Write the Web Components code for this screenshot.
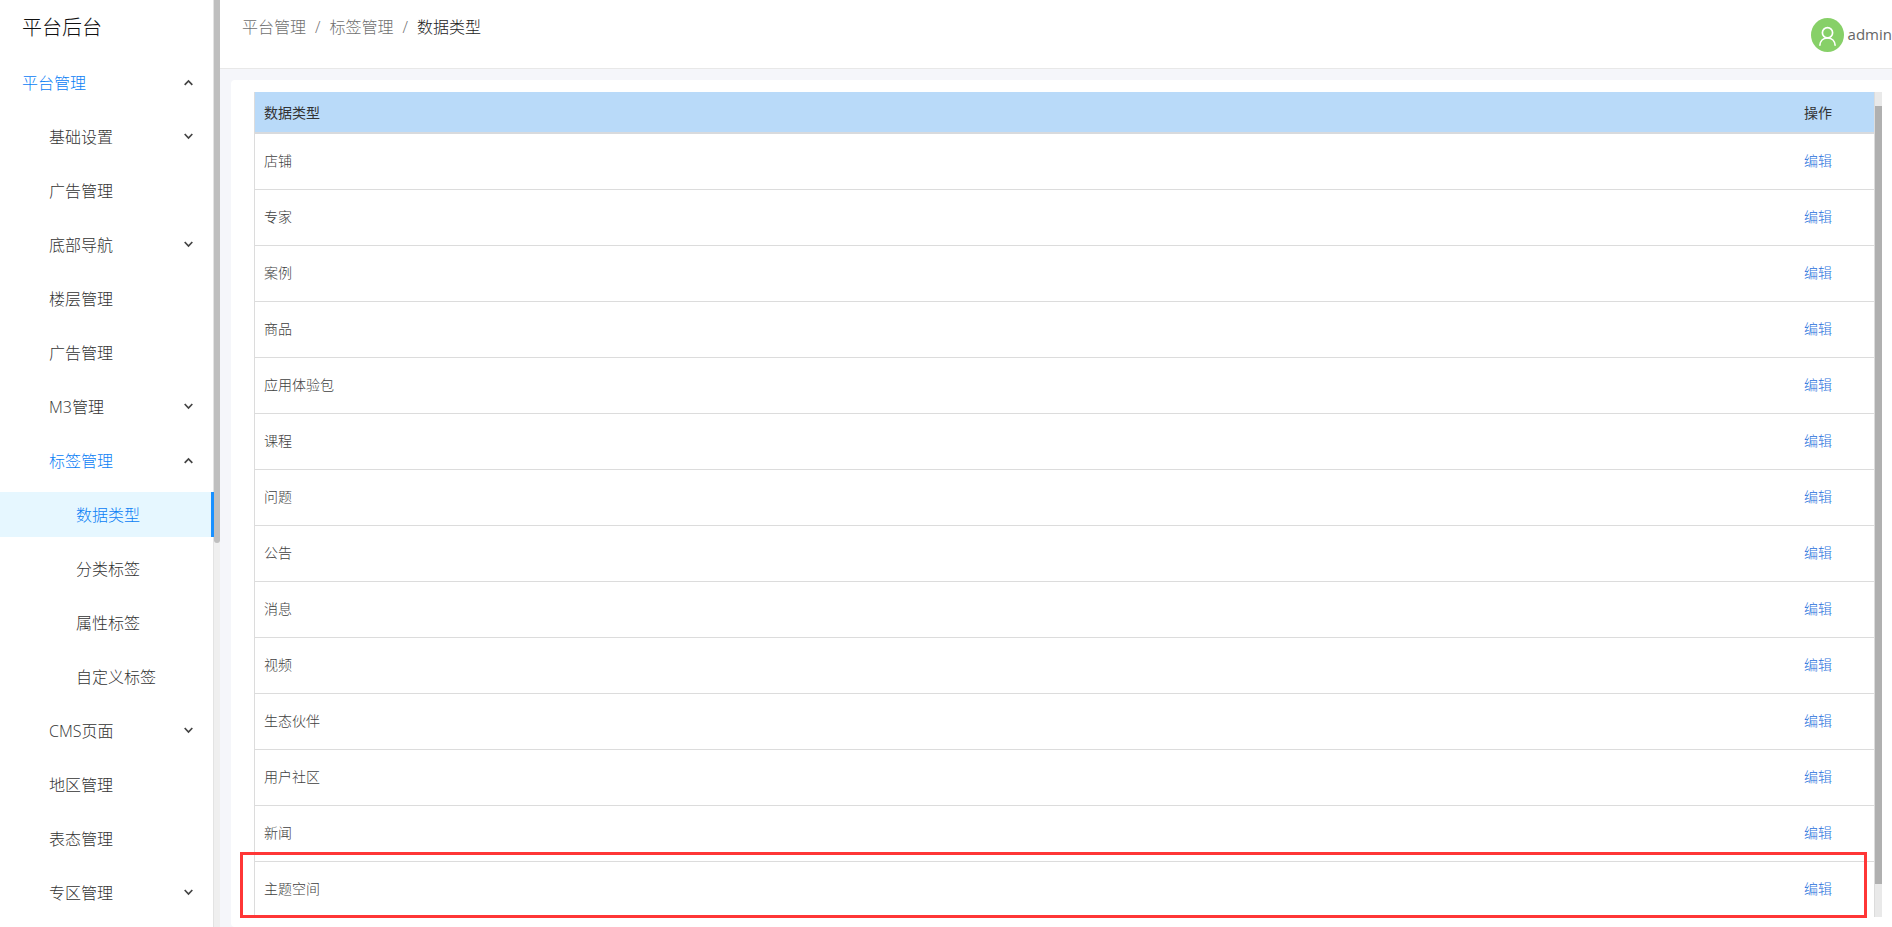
<!DOCTYPE html>
<html lang="zh-CN">
<head>
<meta charset="utf-8">
<title>平台后台</title>
<style>
  html, body { margin: 0; height: 100%; }
  body {
    font-family: "Open Sans", "Noto Sans CJK SC", sans-serif;
    font-size: 16px;
    font-weight: 300;
    color: #333;
    background: #f5f6fa;
    overflow: hidden;
    --primary: #1890ff;
    --primary-text: #0a80f5;
    --line: #dcdcdc;
  }
</style>
</head>
<body>
<admin-layout>
  <side-nav slot="side" heading="平台后台">
    <nav-item level="0" open within>平台管理</nav-item>
    <nav-item level="1" closed>基础设置</nav-item>
    <nav-item level="1">广告管理</nav-item>
    <nav-item level="1" closed>底部导航</nav-item>
    <nav-item level="1">楼层管理</nav-item>
    <nav-item level="1">广告管理</nav-item>
    <nav-item level="1" closed>M3管理</nav-item>
    <nav-item level="1" open within>标签管理</nav-item>
    <nav-item level="2" current>数据类型</nav-item>
    <nav-item level="2">分类标签</nav-item>
    <nav-item level="2">属性标签</nav-item>
    <nav-item level="2">自定义标签</nav-item>
    <nav-item level="1" closed>CMS页面</nav-item>
    <nav-item level="1">地区管理</nav-item>
    <nav-item level="1">表态管理</nav-item>
    <nav-item level="1" closed>专区管理</nav-item>
  </side-nav>
  <top-bar slot="top">
    <bread-crumbs items="平台管理,标签管理,数据类型"></bread-crumbs>
    <user-badge slot="user">admin</user-badge>
  </top-bar>
  <content-card>
    <type-table rows="店铺,专家,案例,商品,应用体验包,课程,问题,公告,消息,视频,生态伙伴,用户社区,新闻,主题空间"></type-table>
  </content-card>
</admin-layout>

<script>
  function define(name, markup, setup) {
    const template = document.createElement('template');
    template.innerHTML = markup;
    customElements.define(name, class extends HTMLElement {
      constructor() {
        super();
        this.attachShadow({ mode: 'open' }).append(template.content.cloneNode(true));
      }
      connectedCallback() {
        if (setup && !this.ready) { this.ready = true; setup(this, this.shadowRoot); }
      }
    });
  }

  define('admin-layout', `
    <style>
      :host { display: grid; grid-template-columns: 220px minmax(0, 1fr); height: 100vh; }
      .main { display: flex; flex-direction: column; min-height: 0; }
      main { flex: 1; min-height: 0; display: flex; padding: 11px 0 0 11px; }
    </style>
    <slot name="side"></slot>
    <div class="main"><slot name="top"></slot><main><slot></slot></main></div>`);

  define('side-nav', `
    <style>
      :host { display: flex; min-height: 0; overflow: hidden; background: #fff; }
      .menu { flex: 1; box-shadow: inset -1px 0 #e3e3e3; }
      h1 { margin: 0; height: 56px; padding: 0 22px; font-size: 20px; line-height: 56px; font-weight: inherit; color: #111; }
      nav { padding-top: 4px; display: flex; flex-direction: column; gap: 9px; }
      .track { width: 6px; background: #efefef; }
      .thumb { height: 543px; border-radius: 0 0 3px 3px; background: #bfbfbf; }
    </style>
    <div class="menu"><h1></h1><nav><slot></slot></nav></div>
    <div class="track"><div class="thumb"></div></div>`,
    (el, root) => { root.querySelector('h1').textContent = el.getAttribute('heading'); });

  define('nav-item', `
    <style>
      :host { display: block; --indent: 22px; }
      :host([level="1"]) { --indent: 49px; }
      :host([level="2"]) { --indent: 76px; }
      a, button {
        box-sizing: border-box; width: 100%; height: 45px; margin: 0; border: 0;
        display: flex; align-items: center; justify-content: space-between;
        padding: 0 21px 0 var(--indent); background: none;
        font: inherit; line-height: 24px; color: inherit; text-decoration: none; cursor: pointer;
      }
      :host([within]) .label { color: var(--primary-text); }
      :host([current]) a { color: var(--primary-text); background: #e6f7ff; border-right: 3px solid var(--primary); }
      svg { width: 9px; height: 7px; fill: none; stroke: #444; stroke-width: 1.7; }
    </style>`,
    (el, root) => {
      const expandable = el.hasAttribute('open') || el.hasAttribute('closed');
      const control = document.createElement(expandable ? 'button' : 'a');
      control.innerHTML = '<span class="label"><slot></slot></span>';
      if (expandable) {
        const open = el.hasAttribute('open');
        control.type = 'button';
        control.setAttribute('aria-expanded', open);
        control.insertAdjacentHTML('beforeend',
          `<svg viewBox="0 0 9 7" aria-hidden="true"><path d="${open ? 'M.7 5.9 4.5 1.9 8.3 5.9' : 'M.7 1 4.5 5 8.3 1'}"/></svg>`);
      } else {
        control.href = '#';
      }
      root.append(control);
    });

  define('top-bar', `
    <style>
      :host { display: block; }
      header {
        box-sizing: border-box; height: 69px; padding-left: 22px;
        display: flex; justify-content: space-between; align-items: flex-start;
        background: #fff; border-bottom: 1px solid #e8e8e8;
      }
    </style>
    <header><slot></slot><slot name="user"></slot></header>`);

  define('bread-crumbs', `
    <style>
      :host { display: block; padding-top: 15px; line-height: 24px; }
      ol { display: flex; margin: 0; padding: 0; list-style: none; }
      li + li::before { content: "/"; margin: 0 9px; color: #707070; }
      a { color: #707070; text-decoration: none; }
      span { color: #222; }
    </style>
    <nav aria-label="breadcrumb"><ol></ol></nav>`,
    (el, root) => {
      const items = el.getAttribute('items').split(',');
      root.querySelector('ol').innerHTML = items.map((text, i) =>
        i < items.length - 1 ? `<li><a href="#">${text}</a></li>` : `<li><span>${text}</span></li>`).join('');
    });

  define('user-badge', `
    <style>
      :host { display: flex; gap: 4px; padding-top: 18px; font-size: 15px; line-height: 32px; white-space: nowrap; font-weight: 400; color: #666; }
      svg { flex: none; width: 33px; height: 34px; }
    </style>
    <svg viewBox="0 0 33 34" aria-hidden="true">
      <ellipse cx="16.5" cy="17" rx="16.5" ry="17" fill="#87d068"/>
      <g fill="none" stroke="#fff" stroke-width="1.7">
        <circle cx="16.5" cy="14.8" r="5.1"/>
        <path d="M8.8 27.8C9 23 12.2 20 16.5 20s7.500 3 7.700 7.800"/>
      </g>
    </svg>
    <span><slot></slot></span>`);

  define('content-card', `
    <style>
      :host {
        flex: 1; min-width: 0; box-sizing: border-box; position: relative; display: flex;
        padding: 12px 10px 10px 23px; border-radius: 4px 0 0 4px; background: #fff;
      }
      .highlight {
        position: absolute; left: 9px; right: 25px; bottom: 9px; height: 66px;
        box-sizing: border-box; border: 3px solid #ff3636; pointer-events: none;
      }
    </style>
    <slot></slot>
    <div class="highlight"></div>`);

  define('type-table', `
    <style>
      :host { flex: 1; min-width: 0; display: flex; overflow: hidden; font-size: 14px; color: #404040; }
      .view { flex: 1; min-width: 0; overflow: hidden; }
      table {
        width: 100%; table-layout: fixed; border-collapse: separate; border-spacing: 0;
        border: solid var(--line); border-width: 0 1px;
      }
      th, td { box-sizing: border-box; padding: 0 9px; text-align: left; line-height: 20px; }
      th { height: 42px; padding-top: 2px; font-weight: 400; color: #333; background: #b9daf9; border-bottom: 2px solid #d8dadd; }
      td { height: 56px; padding-bottom: 2px; border-bottom: 1px solid var(--line); }
      .action { width: 80px; }
      th:last-child, td:last-child { padding-left: 10px; }
      a { color: #1f70dc; text-decoration: none; }
      .track { width: 7px; padding: 14px 0 33px; background: #e9e9e9; display: flex; }
      .thumb { flex: 1; background: #b0b0b0; }
    </style>
    <div class="view">
      <table>
        <thead><tr><th scope="col">数据类型</th><th scope="col" class="action">操作</th></tr></thead>
        <tbody></tbody>
      </table>
    </div>
    <div class="track"><div class="thumb"></div></div>`,
    (el, root) => {
      root.querySelector('tbody').innerHTML = el.getAttribute('rows').split(',')
        .map(text => `<tr><td>${text}</td><td><a href="#">编辑</a></td></tr>`).join('');
    });
</script>
</body>
</html>
